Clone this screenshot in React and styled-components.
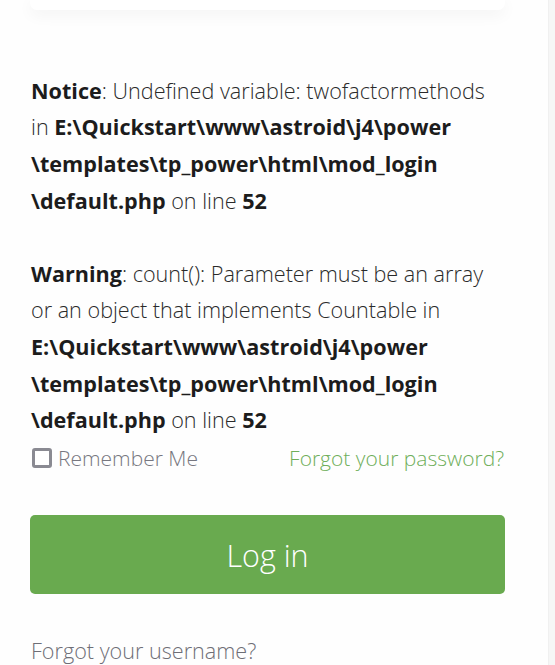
import React from "react";
import styled, { createGlobalStyle } from "styled-components";

const Global = createGlobalStyle`
  html, body { margin: 0; padding: 0; background: #fefefe; }
  body { font-family: "Open Sans", "Liberation Sans", sans-serif; overflow: hidden; }
`;

const Page = styled.div`
  width: 555px;
  height: 665px;
  display: flex;
  overflow: hidden;
`;

const Main = styled.div`
  flex: 1;
  padding: 0 44px 0 31px;
  display: flex;
  flex-direction: column;
`;

const Edge = styled.div`
  width: 6px;
  background: #f6f6f6;
  border-left: 1px solid #f0f0f0;
`;

const Card = styled.div`
  height: 10px;
  margin: 0 -1px 0 -1px;
  background: #ffffff;
  border-radius: 0 0 7px 7px;
  box-shadow: 0 4px 16px rgba(0, 0, 0, 0.06);
`;

const Messages = styled.div`
  margin-top: 63px;
  font-size: 21.6px;
  line-height: 36.6px;
  font-weight: 300;
  color: #2a2a2a;
`;

const Msg = styled.p`
  margin: 0 0 ${(p) => (p.$last ? "0" : "36.6px")};
  b { font-weight: 700; color: #1c1c1c; }
`;

const OptionsRow = styled.div`
  display: flex;
  align-items: center;
  justify-content: space-between;
  height: 36px;
  margin-top: 1px;
`;

const Remember = styled.label`
  display: flex;
  align-items: center;
  gap: 6px;
  font-size: 21px;
  font-weight: 300;
  color: #777780;
`;

const Box = styled.span`
  width: 14px;
  height: 14px;
  border: 3px solid #8a8a92;
  border-radius: 3px;
  background: #fff;
  margin-left: 1px;
`;

const GreenLink = styled.a`
  font-size: 21px;
  font-weight: 300;
  color: #6fae5a;
  text-decoration: none;
`;

const LoginButton = styled.button`
  margin: 40px -1px 0 -1px;
  height: 80px;
  border: none;
  border-radius: 5px;
  background: #69aa4f;
  color: #ffffff;
  font-family: "Open Sans", "Liberation Sans", sans-serif;
  font-size: 30.5px;
  font-weight: 300;
  cursor: pointer;
`;

const PlainLink = styled.a`
  margin-top: 42px;
  font-size: 21.6px;
  font-weight: 300;
  color: #6e6e76;
  text-decoration: none;
`;

const Path = () => (
  <b>
    E:\Quickstart\www\astroid\j4<wbr />\power<wbr />\templates<wbr />\tp_power<wbr />\html<wbr />\mod_login<wbr />\default.php
  </b>
);

export default function App() {
  return (
    <>
      <Global />
      <Page>
        <Main>
          <Card />
          <Messages>
            <Msg>
              <b>Notice</b>: Undefined variable: twofactormethods in <Path /> on line <b>52</b>
            </Msg>
            <Msg $last>
              <b>Warning</b>: count(): Parameter must be an array or an object that implements Countable in <Path /> on line <b>52</b>
            </Msg>
          </Messages>
          <OptionsRow>
            <Remember>
              <Box />
              Remember Me
            </Remember>
            <GreenLink href="#">Forgot your password?</GreenLink>
          </OptionsRow>
          <LoginButton>Log in</LoginButton>
          <PlainLink href="#">Forgot your username?</PlainLink>
        </Main>
        <Edge />
      </Page>
    </>
  );
}
